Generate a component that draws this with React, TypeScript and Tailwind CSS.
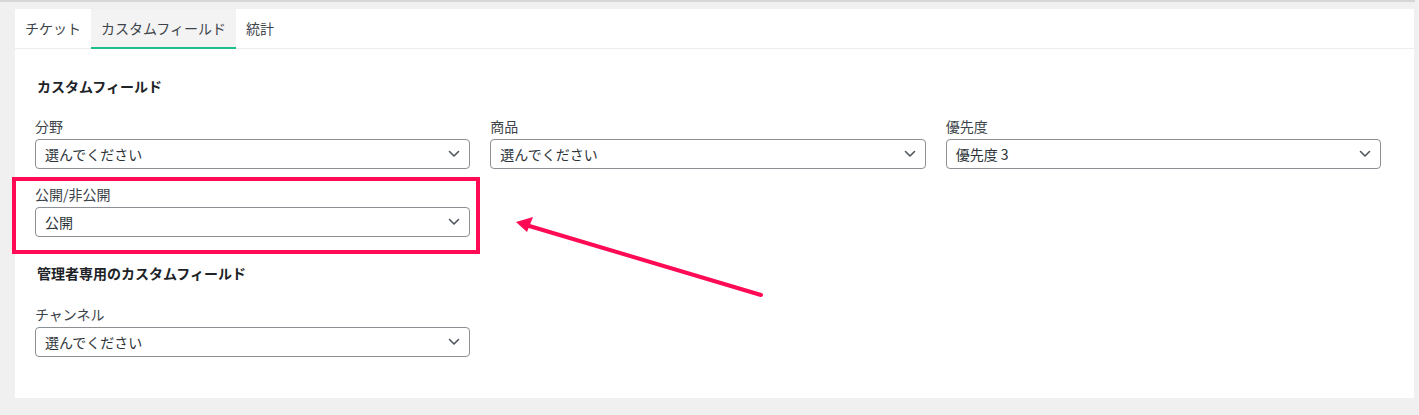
import React from 'react';

const font = { fontFamily: '"Noto Sans CJK JP", "Noto Sans", sans-serif' };

const Chevron = () => (
  <svg width="12" height="8" viewBox="0 0 12 8" className="text-[#50575e]">
    <path d="M1.5 1.5 L6 6 L10.5 1.5" fill="none" stroke="currentColor" strokeWidth="1.6" strokeLinecap="round" strokeLinejoin="round" />
  </svg>
);

const Select = ({ value }: { value: string }) => (
  <div className="flex h-[30px] items-center justify-between rounded-[4px] border border-[#8c8f94] bg-white pl-[9px] pr-[9px] text-[14px] leading-[20px] text-[#2c3338]">
    <span>{value}</span>
    <Chevron />
  </div>
);

const Field = ({ label, value }: { label: string; value: string }) => (
  <div>
    <div className="mb-[3px] text-[14px] leading-[20px] text-[#3c434a]">{label}</div>
    <Select value={value} />
  </div>
);

export default function App() {
  return (
    <div className="relative min-h-screen bg-[#f0f0f1]" style={font}>
      <div className="mr-[4px] h-[8px] border-t-2 border-[#d6d6d6]" />
      <div className="mb-[17px] ml-[15px] mr-[5px] mt-[1px] bg-white">
        {/* Tabs */}
        <div className="flex h-[40px] border-b border-[#ececec] text-[14px] text-[#3c434a]">
          <div className="flex items-center px-[10px]">チケット</div>
          <div className="-mb-[1px] flex items-center border-b-[2px] border-[#1dbf8e] bg-[#f3f3f3] px-[10px]">カスタムフィールド</div>
          <div className="flex items-center px-[10px]">統計</div>
        </div>

        {/* Body */}
        <div className="pb-[41px] pl-[20px] pr-[33px] pt-[27px]">
          <h3 className="mb-[20px] pl-[2px] text-[14px] font-bold leading-[20px] text-[#1d2327]">カスタムフィールド</h3>
          <div className="grid grid-cols-3 gap-x-[20px] gap-y-[15px]">
            <Field label="分野" value="選んでください" />
            <Field label="商品" value="選んでください" />
            <Field label="優先度" value="優先度 3" />
            <Field label="公開/非公開" value="公開" />
          </div>

          <h3 className="mb-[21px] mt-[26px] pl-[2px] text-[14px] font-bold leading-[20px] text-[#1d2327]">管理者専用のカスタムフィールド</h3>
          <div className="grid grid-cols-3 gap-x-[20px]">
            <Field label="チャンネル" value="選んでください" />
          </div>
        </div>
      </div>

      {/* Annotation: highlight box */}
      <div className="absolute left-[12px] top-[177px] h-[77px] w-[468px] border-[4px] border-[#ff0a54]" />

      {/* Annotation: arrow */}
      <svg className="absolute left-0 top-0" width="1419" height="415" viewBox="0 0 1419 415">
        <line x1="761" y1="295" x2="526" y2="225" stroke="#ff0a54" strokeWidth="4" strokeLinecap="round" />
        <path d="M516 222 L533 217 L527 232 Z" fill="#ff0a54" />
      </svg>
    </div>
  );
}
